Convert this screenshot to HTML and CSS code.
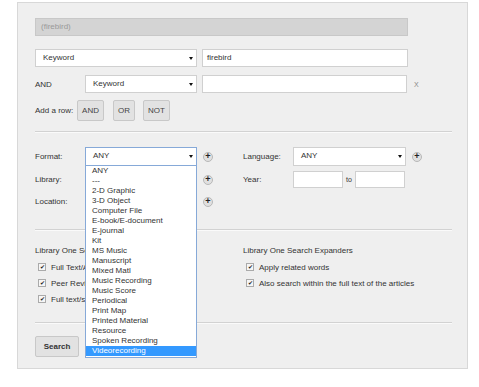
FILE: index.html
```html
<!DOCTYPE html>
<html lang="en">
<head>
    <meta charset="UTF-8">
    <title>Advanced Search</title>
    <link rel="stylesheet" href="styles.css">
</head>
<body>
<div class="panel">
    <div class="query">(firebird)</div>

    <div class="row row_first">
        <div class="select select_wide">Keyword<span class="select__arrow"></span></div>
        <div class="input input_term">firebird</div>
    </div>

    <div class="row row_second">
        <span class="row__label">AND</span>
        <div class="select">Keyword<span class="select__arrow"></span></div>
        <div class="input input_term input_short"></div>
        <span class="row__remove">X</span>
    </div>

    <div class="row row_add">
        <span class="row__add-label">Add a row:</span>
        <button class="btn btn_and">AND</button>
        <button class="btn btn_or">OR</button>
        <button class="btn btn_not">NOT</button>
    </div>

    <hr class="divider">

    <div class="filters">
        <div class="filters__col">
            <div class="filter">
                <span class="filter__label">Format:</span>
                <div class="filter__field">
                    <div class="select select_focus">ANY<span class="select__arrow"></span></div>
                    <!-- open format list -->
                    <ul class="dropdown">
                        <li>ANY</li>
                        <li>---</li>
                        <li>2-D Graphic</li>
                        <li>3-D Object</li>
                        <li>Computer File</li>
                        <li>E-book/E-document</li>
                        <li>E-journal</li>
                        <li>Kit</li>
                        <li>MS Music</li>
                        <li>Manuscript</li>
                        <li>Mixed Matl</li>
                        <li>Music Recording</li>
                        <li>Music Score</li>
                        <li>Periodical</li>
                        <li>Print Map</li>
                        <li>Printed Material</li>
                        <li>Resource</li>
                        <li>Spoken Recording</li>
                        <li class="dropdown__active">Videorecording</li>
                    </ul>
                </div>
                <span class="plus">+</span>
            </div>
            <div class="filter filter_library">
                <span class="filter__label">Library:</span>
                <div class="filter__field"></div>
                <span class="plus">+</span>
            </div>
            <div class="filter filter_location">
                <span class="filter__label">Location:</span>
                <div class="filter__field"></div>
                <span class="plus">+</span>
            </div>
        </div>
        <div class="filters__col">
            <div class="filter">
                <span class="filter__label">Language:</span>
                <div class="select select_lang">ANY<span class="select__arrow"></span></div>
                <span class="plus">+</span>
            </div>
            <div class="filter filter_year">
                <span class="filter__label">Year:</span>
                <div class="input input_year"></div>
                <span class="filter__to">to</span>
                <div class="input input_year"></div>
            </div>
        </div>
    </div>

    <hr class="divider divider_second">

    <div class="options">
        <div class="options__col">
            <p class="options__title">Library One Search Limiters</p>
            <label class="check"><span class="check__box">&#10004;</span>Full Text/Abstract</label>
            <label class="check"><span class="check__box">&#10004;</span>Peer Reviewed</label>
            <label class="check"><span class="check__box">&#10004;</span>Full text/stream</label>
        </div>
        <div class="options__col">
            <p class="options__title">Library One Search Expanders</p>
            <label class="check"><span class="check__box">&#10004;</span>Apply related words</label>
            <label class="check"><span class="check__box">&#10004;</span>Also search within the full text of the articles</label>
        </div>
    </div>

    <hr class="divider divider_third">

    <button class="btn btn_search">Search</button>
</div>
</body>
</html>
```

FILE: styles.css
```css
body {
    margin: 0;
    background: #fff;
    font-family: "Liberation Sans", Arial, sans-serif;
    font-size: 8px;
    color: #333;
}
.panel {
    width: 415px;
    margin: 2px 0 0 17px;
    padding: 15px 17px 11px;
    background: #efefef;
    border: 1px solid #d8d8d8;
}
.query {
    width: 366px;
    height: 16px;
    line-height: 16px;
    padding-left: 5px;
    background: #d4d4d4;
    border: 1px solid #c8c8c8;
    color: #999;
}
.row {
    display: flex;
    align-items: center;
    gap: 5px;
}
.row_first { margin-top: 13px; }
.row_second { margin-top: 8px; }
.row_add { margin-top: 7px; gap: 0; }
.row__label {
    width: 45px;
}
.row__remove {
    margin-left: 2px;
    color: #888;
    font-size: 7px;
}
.row__add-label {
    width: 42px;
}
.select {
    position: relative;
    box-sizing: border-box;
    width: 112px;
    height: 18px;
    line-height: 16px;
    padding-left: 7px;
    background: #fff;
    border: 1px solid #d0d0d0;
}
.select_wide { width: 162px; }
.select_focus { border-color: #86a9d8; height: 19px; }
.select_lang { width: 113px; height: 19px; }
.select__arrow {
    position: absolute;
    right: 3px;
    top: 7px;
    border-left: 2px solid transparent;
    border-right: 2px solid transparent;
    border-top: 3px solid #111;
}
.input {
    box-sizing: border-box;
    height: 18px;
    line-height: 16px;
    padding-left: 4px;
    background: #fff;
    border: 1px solid #d0d0d0;
}
.input_term { width: 206px; }
.input_short { width: 205px; }
.btn {
    height: 21px;
    padding: 0;
    background: #e2e2e2;
    border: 1px solid #c8c8c8;
    border-radius: 2px;
    font-family: inherit;
    font-size: 8px;
    color: #444;
}
.btn_and { width: 27px; }
.btn_or { width: 22px; margin-left: 9px; }
.btn_not { width: 27px; margin-left: 8px; }
.divider {
    width: 417px;
    margin: 10px 0 0;
    border: 0;
    border-top: 1px solid #d2d2d2;
    border-bottom: 1px solid #fafafa;
}
.filters {
    display: grid;
    grid-template-columns: 208px 209px;
    margin-top: 14px;
    height: 82px;
}
.filter {
    display: flex;
    align-items: center;
    height: 19px;
}
.filter_library { margin-top: 5px; height: 17px; }
.filter_location { margin-top: 5px; height: 17px; }
.filter_year { margin-top: 5px; height: 17px; }
.filter__label {
    width: 50px;
}
.filter__field {
    position: relative;
    width: 112px;
}
.plus {
    box-sizing: border-box;
    width: 10px;
    height: 10px;
    margin-left: 6px;
    border: 1px solid #b8b8b8;
    border-radius: 50%;
    background: #e0e0e0;
    font-size: 9px;
    font-weight: bold;
    line-height: 7px;
    text-align: center;
    color: #222;
}
.input_year {
    width: 50px;
    height: 17px;
}
.filter__to {
    width: 12px;
    padding-left: 3px;
    box-sizing: border-box;
    font-size: 7px;
}
.dropdown {
    position: absolute;
    top: 19px;
    left: 0;
    box-sizing: border-box;
    width: 112px;
    margin: 0;
    padding: 0 0 1px;
    list-style: none;
    background: #fff;
    border: 1px solid #86a9d8;
    border-top: 0;
    z-index: 2;
    line-height: 10px;
}
.dropdown li {
    height: 10px;
    padding-left: 6px;
}
.dropdown .dropdown__active {
    background: #3399ff;
    color: #fff;
}
.divider_second { margin-top: 0; }
.options {
    display: grid;
    grid-template-columns: 208px 209px;
    margin-top: 15px;
    height: 76px;
}
.options__title {
    margin: 0 0 4px;
    white-space: nowrap;
}
.check {
    display: flex;
    align-items: center;
    height: 16px;
    padding-left: 3px;
    white-space: nowrap;
}
.check__box {
    width: 6px;
    height: 6px;
    margin-right: 5px;
    border: 1px solid #aaa;
    background: #f6f6f6;
    font-size: 6px;
    line-height: 6px;
    text-align: center;
    color: #222;
}
.divider_third { margin-top: 0; }
.btn_search {
    width: 44px;
    margin-top: 12px;
    font-weight: bold;
    font-size: 8px;
    color: #333;
}
```
